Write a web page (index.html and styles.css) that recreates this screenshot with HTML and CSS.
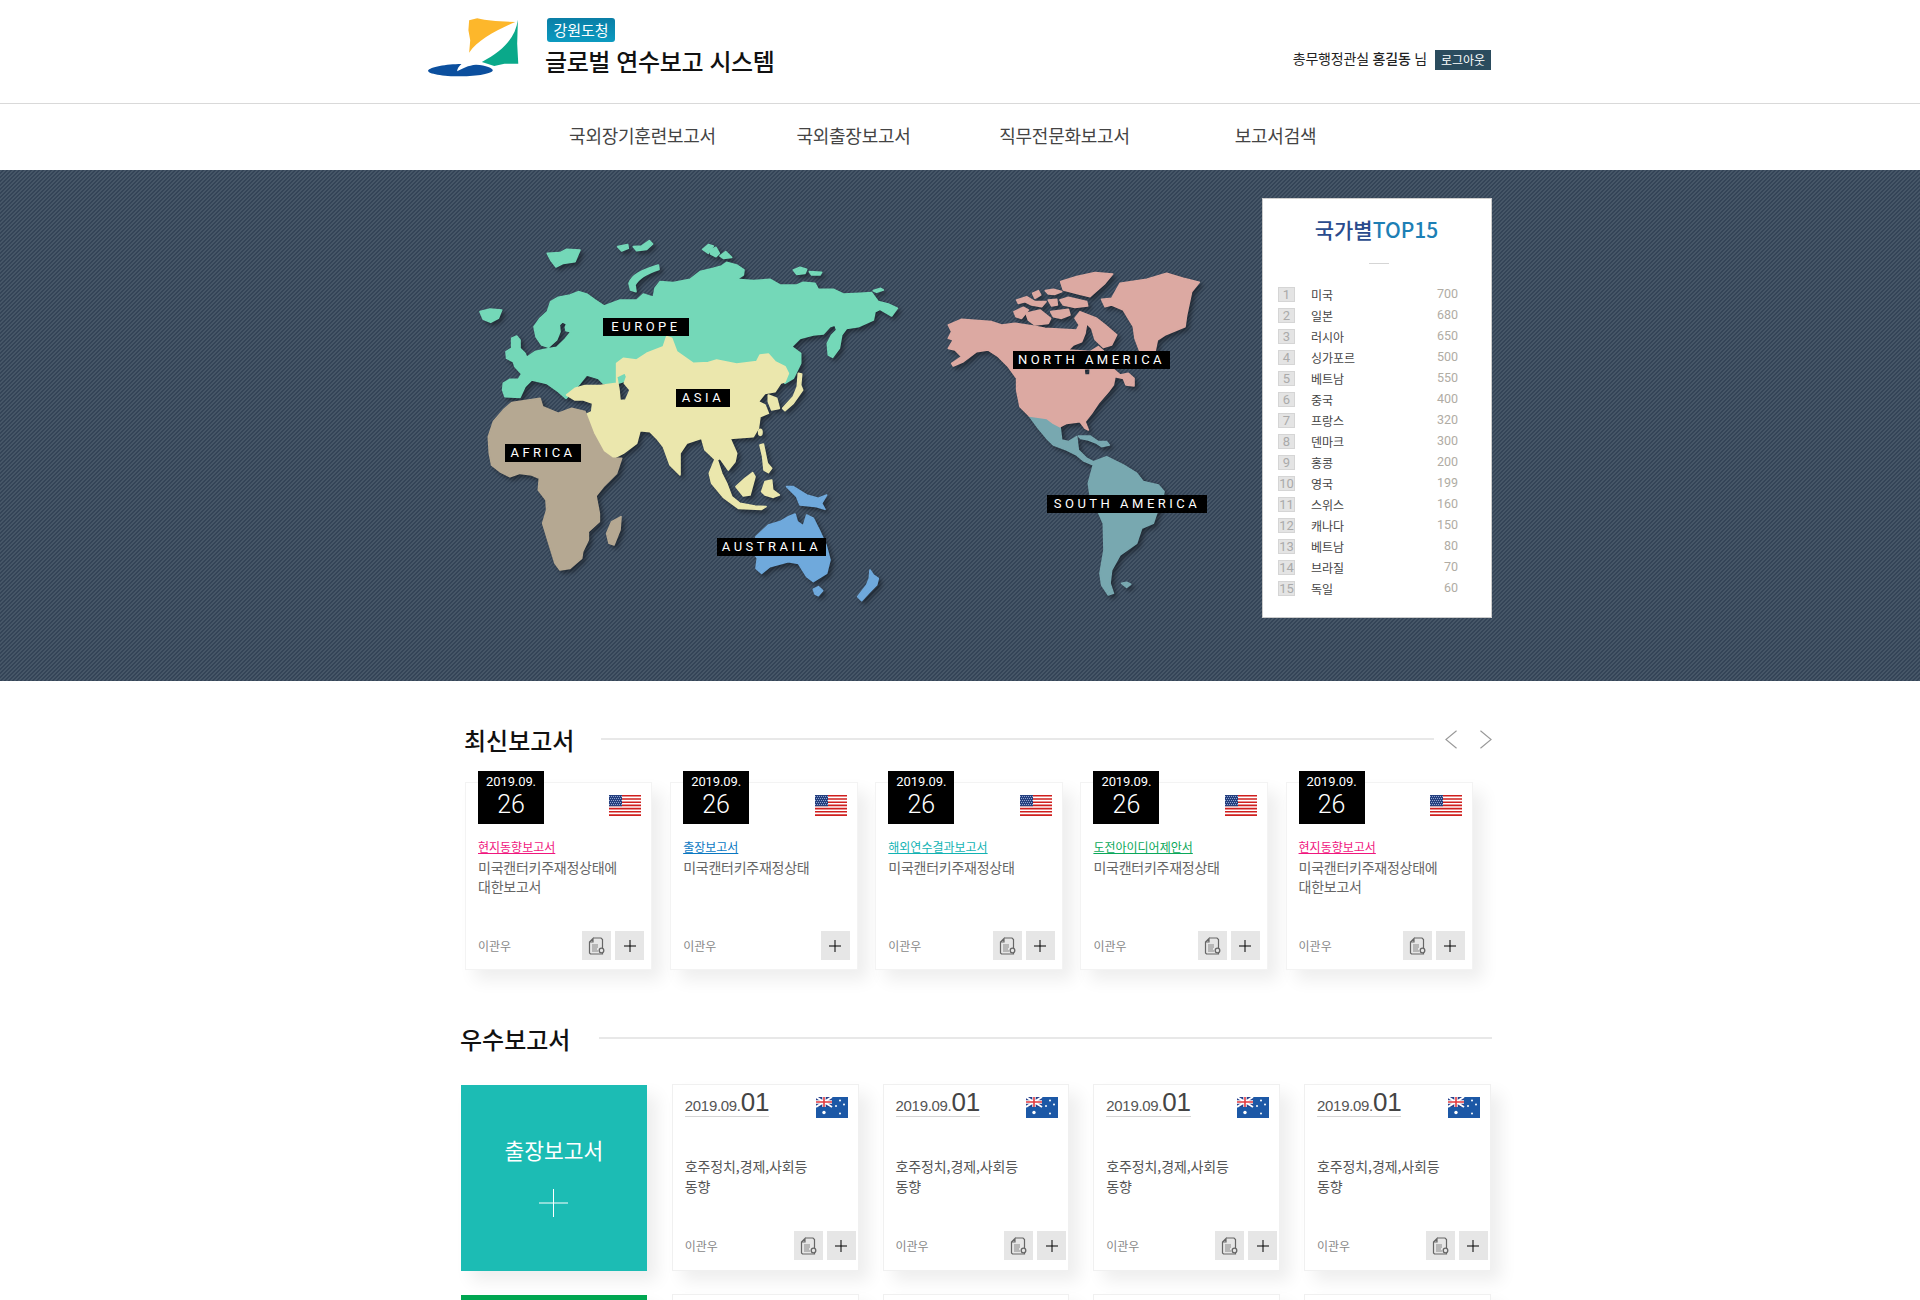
FILE: index.html
```html
<!DOCTYPE html>
<html lang="ko">
<head>
    <meta charset="UTF-8">
    <meta name="viewport" content="width=device-width, initial-scale=1.0">
    <title>글로벌 연수보고 시스템</title>
    <link rel="stylesheet" href="styles.css">
</head>
<body>
    <svg class="defs" width="0" height="0" aria-hidden="true">
        <symbol id="flag-us" viewBox="0 0 32 21">
            <rect width="32" height="21" fill="#fff"/>
            <path d="M0 0h32v1.600H0zM0 3.200h32v1.600H0zM0 6.400h32v1.600H0zM0 9.600h32v1.600H0zM0 12.800h32v1.600H0zM0 16h32v1.600H0zM0 19.200h32V21H0z" fill="#cf1f1e"/>
            <rect width="13" height="11.200" fill="#25407f"/>
            <path d="M0 1.500h13M1 3.500h12M0 5.500h13M1 7.500h12M0 9.500h13" stroke="#8fa3cf" stroke-width="1" stroke-dasharray="1 1"/>
        </symbol>
        <symbol id="flag-au" viewBox="0 0 32 21">
            <rect width="32" height="21" fill="#1c58a6"/>
            <rect width="16" height="10" fill="#27408b"/>
            <path d="M0 0l16 10M16 0L0 10" stroke="#fff" stroke-width="2"/>
            <path d="M8 0v10M0 5h16" stroke="#fff" stroke-width="3.400"/>
            <path d="M8 0v10M0 5h16" stroke="#e2393e" stroke-width="1.600"/>
            <circle cx="8" cy="15.500" r="1.700" fill="#fff"/>
            <circle cx="24" cy="3.500" r="1" fill="#fff"/>
            <circle cx="24" cy="16.500" r="1" fill="#fff"/>
            <circle cx="20" cy="9" r="1" fill="#fff"/>
            <circle cx="28" cy="7.500" r="1" fill="#fff"/>
        </symbol>
        <symbol id="icon-doc" viewBox="0 0 17 18">
            <path d="M5 1h8l1.500 1.500v9M14.500 15.500V17H2.500L1.500 16V5L5 1.500V5H1.500" fill="none" stroke="#666" stroke-width="1.200"/>
            <path d="M4 8h6M4 10h6M4 12h5M4 14h6" stroke="#888" stroke-width="1.200"/>
            <circle cx="13.500" cy="13.500" r="2.300" fill="none" stroke="#666" stroke-width="1.300"/>
        </symbol>
        <symbol id="icon-plus" viewBox="0 0 12 12">
            <path d="M6 0v12M0 6h12" stroke="#000" stroke-width="1"/>
        </symbol>
    </svg>

    <div class="page">
        <header class="top">
            <div class="wrap top-inner">
                <svg class="logo" viewBox="80 50 250 180" preserveAspectRatio="none">
                    <path d="M193 60L215 54L235 58L265 62L320 65C270 88 215 120 193 157L196 120L191 90Z" fill="#fdb72b"/>
                    <path d="M327 58C320 110 290 150 228 185L262 197L290 190L328 190L325 130Z" fill="#0aa98a"/>
                    <path d="M80 211C85 200 130 191 172 191C165 198 160 205 160 213C175 204 190 195 212 193C240 195 258 203 258 210C258 220 215 228 170 228C120 228 80 220 80 211Z" fill="#0b4f9e"/>
                </svg>
                <div class="brand">
                    <span class="brand-badge">강원도청</span>
                    <h1>글로벌 연수보고 시스템</h1>
                </div>
                <div class="user">
                    <span class="user-name">총무행정관실 <b>홍길동</b> 님</span>
                    <a class="logout" href="#">로그아웃</a>
                </div>
            </div>
        </header>

        <nav class="gnb">
            <div class="wrap gnb-inner">
                <a href="#">국외장기훈련보고서</a>
                <a href="#">국외출장보고서</a>
                <a href="#">직무전문화보고서</a>
                <a href="#">보고서검색</a>
            </div>
        </nav>

        <section class="hero">
            <div class="wrap hero-inner">
                <div class="map">
                    <svg class="map-svg" viewBox="428 170 834 510">
                        <g class="land" transform="translate(460 220) scale(.33333)">
                            <g fill="#74d8b8" stroke="#74d8b8">
                                <path d="M262 100L300 98L320 88L360 90L345 125L310 130L288 141L272 120Z"/>
                                <path d="M473 80L503 74L505 85L485 93Z"/>
                                <path d="M520 80L545 78L568 62L578 72L560 88L530 92Z"/>
                                <path d="M728 88L745 74L760 78L745 100Z"/>
                                <path d="M752 90L768 82L778 100L768 110L752 102Z"/>
                                <path d="M780 108L797 95L815 112L790 115Z"/>
                                <path d="M507 190C515 165 545 150 595 135L597 148C565 158 535 175 525 195L528 215L512 210Z"/>
                                <path d="M1000 150L1020 142L1040 148L1035 160L1010 163Z"/>
                                <path d="M1048 155L1085 157L1080 165L1055 165Z"/>
                                <path d="M1240 212L1262 205L1270 210L1250 217Z"/>
                                <path d="M60 275L90 267L125 270L115 295L92 307L70 298Z"/>
                                <path d="M128 510L130 490L150 478L175 478L185 462L165 440L160 425L140 415L138 395L155 385L155 355L170 348L180 360L180 385L195 400L200 412L225 395L255 388L290 382L315 358L333 335L318 332L316 322L320 312L308 305L298 315L300 335L290 360L265 382L245 375L228 350L222 320L240 295L262 275L272 245L295 232L330 225L355 215L380 222L405 240L432 258L480 240L530 240L550 222L580 232L585 205L600 185L640 188L690 178L720 155L760 145L785 138L800 127L830 135L852 150L850 165L830 178L880 182L930 178L960 195L1010 195L1030 187L1065 190L1075 208L1120 208L1150 222L1200 220L1235 218L1255 245L1285 252L1312 265L1295 288L1260 268L1245 275L1240 300L1195 320L1160 325L1145 345L1138 385L1118 412L1105 405L1102 370L1115 345L1130 330L1125 315L1110 320L1090 342L1060 345L1020 355L995 380L1022 400L1022 430L1000 475L975 490L960 470L900 450L600 450L472 490L430 490L415 475L380 465L360 490L318 535L295 515L260 490L215 480L195 500L180 532L135 530Z"/>
                            </g>
                            <g fill="#ebe7ad" stroke="#ebe7ad">
                                <path fill-rule="evenodd" d="M320 525L345 505L375 497L420 497L470 490L470 430L490 415L530 420L560 400L610 380L620 350L635 355L650 395L700 430L745 428L770 420L830 432L890 425L900 405L925 402L945 425L975 440L985 460L975 485L962 490L945 515L915 520L895 545L915 555L925 580L900 590L895 625L880 650L810 655L830 700L825 725L805 750L780 715L772 720L785 760L800 790L815 830L840 850L885 858L918 860L905 868L835 865L790 832L755 790L748 760L765 718L735 690L725 655L680 670L660 700L660 765L630 735L610 680L590 655L570 635L540 632L530 670L490 700L460 715L430 695L400 640L375 585L395 575L398 550L370 540L345 540ZM470 470L495 458L500 470L493 490L510 510L497 540L480 542L477 510Z"/>
                                <path d="M925 525L950 535L958 565L935 570L925 545Z"/>
                                <path d="M1015 460L1025 462L1022 495L1028 510L1000 550L975 572L968 565L1000 530L1012 500Z"/>
                                <ellipse cx="901" cy="637" rx="5" ry="9"/>
                                <path d="M900 675L910 672L922 730L935 745L925 758L912 750L908 710Z"/>
                                <path d="M828 800L855 775L878 758L885 770L870 825L850 828Z"/>
                                <path d="M905 815L915 785L935 780L938 810L958 825L940 832L915 825Z"/>
                            </g>
                            <g fill="#b5a892" stroke="#b5a892">
                                <path d="M85 650L100 605L130 570L155 548L240 535L248 560L295 580L335 565L375 575L400 640L430 695L458 715L485 715L470 760L430 800L408 828L418 880L418 905L385 935L385 960L368 995L365 1015L330 1045L300 1050L285 1030L265 965L248 910L260 870L258 840L235 810L238 775L215 765L180 760L150 770L120 755L95 735L88 700Z"/>
                                <path d="M440 940L455 905L483 890L480 930L462 975L447 970Z"/>
                            </g>
                            <g fill="#6fa9dc" stroke="#6fa9dc">
                                <path d="M888 950L925 915L960 905L985 890L1005 882L1012 905L1030 918L1040 885L1060 895L1080 935L1098 975L1110 1020L1100 1060L1060 1085L1040 1070L1015 1030L985 1025L930 1040L905 1060L888 1045L892 1015L882 1000Z"/>
                                <path d="M980 800L1000 800L1040 825L1075 835L1100 825L1085 850L1095 868L1070 860L1050 858L1020 855L1010 830Z"/>
                                <path d="M1060 1108L1075 1100L1088 1112L1075 1127L1065 1122Z"/>
                                <path d="M1230 1050L1240 1065L1255 1075L1250 1095L1225 1120L1205 1142L1193 1130L1220 1095L1228 1075Z"/>
                            </g>
                        </g>
                        <g class="land" transform="translate(920 250) scale(.33333)">
                            <g fill="#78a8b0" stroke="#78a8b0">
                                <path d="M328 498L380 505L400 520L420 530L425 570L445 575L470 560L475 600L500 625L520 635L560 620L610 645L650 670L670 695L715 705L732 725L725 760L710 790L700 820L665 835L650 880L600 915L575 960L570 1000L580 1030L565 1035L545 1005L540 970L552 900L550 820L530 775L510 735L505 700L520 645L490 632L470 615L440 600L400 585L380 565L355 535Z"/>
                                <path d="M475 558L510 558L535 575L560 575L568 585L545 590L530 580L505 570L482 565Z"/>
                                <path d="M605 1000L620 997L632 1003L620 1012Z"/>
                            </g>
                            <g fill="#dca9a2" stroke="#dca9a2">
                                <path fill-rule="evenodd" d="M85 225L125 208L175 212L215 215L245 225L285 220L340 228L375 235L430 238L470 240L478 225L465 205L480 185L530 205L555 225L590 255L575 285L550 292L525 268L515 235L500 220L495 250L485 275L460 285L445 300L510 305L535 290L550 303L560 340L600 375L625 370L642 385L642 408L618 405L610 385L585 380L580 405L565 425L535 460L515 490L495 515L505 540L495 535L480 515L440 520L420 530L400 520L380 505L328 498L300 470L290 420L290 385L265 350L235 320L205 300L170 305L130 335L100 348L95 340L125 320L105 300L85 295L100 270L85 265L95 245ZM492 357L511 355L510 375L494 375Z"/>
                                <path d="M545 148L575 145L600 100L680 88L740 70L790 85L838 97L815 125L800 195L795 230L735 255L712 270L705 305L660 305L645 265L640 230L610 180L575 165L555 170Z"/>
                                <path d="M422 95L470 80L525 68L578 72L555 100L510 140L470 130L430 120Z"/>
                                <path d="M338 130L355 122L362 135L345 145Z"/>
                                <path d="M376 122L400 118L425 125L405 133L385 132Z"/>
                                <path d="M290 150L320 140L345 155L378 155L365 170L335 165L315 155L295 160Z"/>
                                <path d="M385 150L410 148L412 165L395 168Z"/>
                                <path d="M420 150L445 142L500 155L503 168L465 172L430 165Z"/>
                                <path d="M282 185L310 172L325 180L305 205L288 200Z"/>
                                <path d="M318 190L360 180L392 205L385 220L345 225L325 210Z"/>
                                <path d="M392 185L445 178L450 195L425 205L400 200Z"/>
                            </g>
                        </g>
                    </svg>
                    <span class="pin pin-europe">EUROPE</span>
                    <span class="pin pin-asia">ASIA</span>
                    <span class="pin pin-africa">AFRICA</span>
                    <span class="pin pin-australia">AUSTRAILA</span>
                    <span class="pin pin-namerica">NORTH AMERICA</span>
                    <span class="pin pin-samerica">SOUTH AMERICA</span>
                </div>

                <aside class="rank">
                    <h3><span class="rank-a">국가별</span><span class="rank-b">TOP15</span></h3>
                    <ol class="rank-list">
                        <li><i>1</i><span>미국</span><em>700</em></li>
                        <li><i>2</i><span>일본</span><em>680</em></li>
                        <li><i>3</i><span>러시아</span><em>650</em></li>
                        <li><i>4</i><span>싱가포르</span><em>500</em></li>
                        <li><i>5</i><span>베트남</span><em>550</em></li>
                        <li><i>6</i><span>중국</span><em>400</em></li>
                        <li><i>7</i><span>프랑스</span><em>320</em></li>
                        <li><i>8</i><span>덴마크</span><em>300</em></li>
                        <li><i>9</i><span>홍콩</span><em>200</em></li>
                        <li><i>10</i><span>영국</span><em>199</em></li>
                        <li><i>11</i><span>스위스</span><em>160</em></li>
                        <li><i>12</i><span>캐나다</span><em>150</em></li>
                        <li><i>13</i><span>베트남</span><em>80</em></li>
                        <li><i>14</i><span>브라질</span><em>70</em></li>
                        <li><i>15</i><span>독일</span><em>60</em></li>
                    </ol>
                </aside>
            </div>
        </section>

        <div class="wrap">
            <section class="latest">
                <div class="sec-head">
                    <h2>최신보고서</h2>
                    <div class="sec-line"></div>
                    <div class="arrows">
                        <svg viewBox="0 0 13 20"><path d="M12.500 .5L1 10l11.500 9.500"/></svg>
                        <svg viewBox="0 0 13 20"><path d="M.5 .5L12 10 .5 19.500"/></svg>
                    </div>
                </div>
                <div class="latest-row">
                    <article class="card">
                        <div class="card-top">
                            <div class="date-box"><span>2019.09.</span><strong>26</strong></div>
                            <svg class="flag"><use href="#flag-us"/></svg>
                        </div>
                        <a class="tag tag-pink" href="#">현지동향보고서</a>
                        <p class="desc">미국캔터키주재정상태에 대한보고서</p>
                        <div class="card-foot">
                            <span class="author">이관우</span>
                            <a class="btn" href="#"><svg class="i-doc"><use href="#icon-doc"/></svg></a>
                            <a class="btn" href="#"><svg class="i-plus"><use href="#icon-plus"/></svg></a>
                        </div>
                    </article>
                    <article class="card">
                        <div class="card-top">
                            <div class="date-box"><span>2019.09.</span><strong>26</strong></div>
                            <svg class="flag"><use href="#flag-us"/></svg>
                        </div>
                        <a class="tag tag-blue" href="#">출장보고서</a>
                        <p class="desc">미국캔터키주재정상태</p>
                        <div class="card-foot">
                            <span class="author">이관우</span>
                            <a class="btn" href="#"><svg class="i-plus"><use href="#icon-plus"/></svg></a>
                        </div>
                    </article>
                    <article class="card">
                        <div class="card-top">
                            <div class="date-box"><span>2019.09.</span><strong>26</strong></div>
                            <svg class="flag"><use href="#flag-us"/></svg>
                        </div>
                        <a class="tag tag-teal" href="#">해외연수결과보고서</a>
                        <p class="desc">미국캔터키주재정상태</p>
                        <div class="card-foot">
                            <span class="author">이관우</span>
                            <a class="btn" href="#"><svg class="i-doc"><use href="#icon-doc"/></svg></a>
                            <a class="btn" href="#"><svg class="i-plus"><use href="#icon-plus"/></svg></a>
                        </div>
                    </article>
                    <article class="card">
                        <div class="card-top">
                            <div class="date-box"><span>2019.09.</span><strong>26</strong></div>
                            <svg class="flag"><use href="#flag-us"/></svg>
                        </div>
                        <a class="tag tag-green" href="#">도전아이디어제안서</a>
                        <p class="desc">미국캔터키주재정상태</p>
                        <div class="card-foot">
                            <span class="author">이관우</span>
                            <a class="btn" href="#"><svg class="i-doc"><use href="#icon-doc"/></svg></a>
                            <a class="btn" href="#"><svg class="i-plus"><use href="#icon-plus"/></svg></a>
                        </div>
                    </article>
                    <article class="card">
                        <div class="card-top">
                            <div class="date-box"><span>2019.09.</span><strong>26</strong></div>
                            <svg class="flag"><use href="#flag-us"/></svg>
                        </div>
                        <a class="tag tag-pink" href="#">현지동향보고서</a>
                        <p class="desc">미국캔터키주재정상태에 대한보고서</p>
                        <div class="card-foot">
                            <span class="author">이관우</span>
                            <a class="btn" href="#"><svg class="i-doc"><use href="#icon-doc"/></svg></a>
                            <a class="btn" href="#"><svg class="i-plus"><use href="#icon-plus"/></svg></a>
                        </div>
                    </article>
                </div>
            </section>

            <section class="best">
                <div class="sec-head">
                    <h2>우수보고서</h2>
                    <div class="sec-line"></div>
                </div>
                <div class="best-grid">
                    <a class="tile tile-teal" href="#">
                        <span>출장보고서</span>
                        <svg class="tile-plus" viewBox="0 0 29 28"><path d="M14.500 0v28M0 14h29"/></svg>
                    </a>
                    <article class="card-b">
                        <div class="card-b-top">
                            <div class="date-line">2019.09.<b>01</b></div>
                            <svg class="flag"><use href="#flag-au"/></svg>
                        </div>
                        <p class="desc-b">호주정치,경제,사회등 동향</p>
                        <div class="card-foot">
                            <span class="author">이관우</span>
                            <a class="btn" href="#"><svg class="i-doc"><use href="#icon-doc"/></svg></a>
                            <a class="btn" href="#"><svg class="i-plus"><use href="#icon-plus"/></svg></a>
                        </div>
                    </article>
                    <article class="card-b">
                        <div class="card-b-top">
                            <div class="date-line">2019.09.<b>01</b></div>
                            <svg class="flag"><use href="#flag-au"/></svg>
                        </div>
                        <p class="desc-b">호주정치,경제,사회등 동향</p>
                        <div class="card-foot">
                            <span class="author">이관우</span>
                            <a class="btn" href="#"><svg class="i-doc"><use href="#icon-doc"/></svg></a>
                            <a class="btn" href="#"><svg class="i-plus"><use href="#icon-plus"/></svg></a>
                        </div>
                    </article>
                    <article class="card-b">
                        <div class="card-b-top">
                            <div class="date-line">2019.09.<b>01</b></div>
                            <svg class="flag"><use href="#flag-au"/></svg>
                        </div>
                        <p class="desc-b">호주정치,경제,사회등 동향</p>
                        <div class="card-foot">
                            <span class="author">이관우</span>
                            <a class="btn" href="#"><svg class="i-doc"><use href="#icon-doc"/></svg></a>
                            <a class="btn" href="#"><svg class="i-plus"><use href="#icon-plus"/></svg></a>
                        </div>
                    </article>
                    <article class="card-b">
                        <div class="card-b-top">
                            <div class="date-line">2019.09.<b>01</b></div>
                            <svg class="flag"><use href="#flag-au"/></svg>
                        </div>
                        <p class="desc-b">호주정치,경제,사회등 동향</p>
                        <div class="card-foot">
                            <span class="author">이관우</span>
                            <a class="btn" href="#"><svg class="i-doc"><use href="#icon-doc"/></svg></a>
                            <a class="btn" href="#"><svg class="i-plus"><use href="#icon-plus"/></svg></a>
                        </div>
                    </article>
                    <div class="tile tile-green"></div>
                    <div class="card-b"></div>
                    <div class="card-b"></div>
                    <div class="card-b"></div>
                    <div class="card-b"></div>
                </div>
            </section>
        </div>
    </div>
</body>
</html>
```

FILE: styles.css
```css
* {
    box-sizing: border-box;
}
body {
    margin: 0;
    font-family: "Noto Sans CJK KR", "Noto Sans", sans-serif;
    color: #333;
    background: #fff;
}
a {
    color: inherit;
    text-decoration: none;
}
.defs {
    position: absolute;
}
.page {
    height: 1300px;
    overflow: hidden;
}
.wrap {
    width: 1064px;
    margin: 0 auto;
}

/* header */
.top {
    height: 104px;
    border-bottom: 1px solid #d9d9d9;
}
.top-inner {
    display: flex;
    align-items: flex-start;
}
.logo {
    width: 91px;
    height: 60px;
    margin: 17px 26px 0 0;
}
.brand {
    padding-top: 18px;
}
.brand-badge {
    display: block;
    width: 68px;
    height: 24px;
    margin-left: 2px;
    border-radius: 3px;
    background: linear-gradient(#0a7ea6, #0c9ac0);
    color: #fff;
    font-size: 15px;
    line-height: 24px;
    text-align: center;
}
.brand h1 {
    margin: 2px 0 0;
    font-size: 24px;
    font-weight: 500;
    line-height: 34px;
    letter-spacing: -.4px;
    color: #111;
}
.user {
    display: flex;
    align-items: center;
    gap: 8px;
    margin: 50px 1px 0 auto;
    font-size: 14px;
    letter-spacing: -.2px;
    color: #222;
}
.user-name {
    margin-top: -4px;
}
.user b {
    font-weight: 500;
}
.logout {
    width: 56px;
    height: 20px;
    background: #2b4c5e;
    color: #fff;
    font-size: 12px;
    line-height: 20px;
    letter-spacing: 0;
    text-align: center;
}

/* nav */
.gnb {
    height: 66px;
}
.gnb-inner {
    display: grid;
    grid-template-columns: repeat(4, 211px);
    padding-left: 109px;
}
.gnb-inner a {
    font-size: 18px;
    line-height: 62px;
    letter-spacing: -.25px;
    text-align: center;
    color: #444;
}

/* hero */
.hero {
    height: 511px;
    background-color: #3c4c5e;
    background-image: linear-gradient(135deg, #465667 25%, #344457 25%, #344457 50%, #465667 50%, #465667 75%, #344457 75%);
    background-size: 4px 4px;
}
.hero-inner {
    display: flex;
}
.map {
    position: relative;
    width: 834px;
    height: 510px;
    flex: none;
}
.map-svg {
    display: block;
    width: 834px;
    height: 510px;
}
.land {
    filter: drop-shadow(9px 9px 6px rgba(0, 0, 0, .4));
    stroke-width: 5;
    stroke-linejoin: round;
}
.pin {
    position: absolute;
    height: 18px;
    background: #000;
    color: #fff;
    font-family: Roboto, sans-serif;
    font-size: 13px;
    line-height: 18px;
    letter-spacing: 3.500px;
    text-align: center;
}
.pin-europe { left: 175px; top: 148px; width: 86px; }
.pin-asia { left: 248px; top: 219px; width: 54px; }
.pin-africa { left: 77px; top: 274px; width: 76px; }
.pin-australia { left: 289px; top: 368px; width: 109px; }
.pin-namerica { left: 585px; top: 181px; width: 157px; }
.pin-samerica { left: 619px; top: 325px; width: 160px; }

/* ranking */
.rank {
    width: 230px;
    height: 420px;
    margin-top: 28px;
    padding: 15px 33px 0 15px;
    background: #fff;
    border: 1px solid #ccc;
}
.rank h3 {
    position: relative;
    margin: 0 -17px 0 0;
    padding-bottom: 20px;
    font-size: 21px;
    font-weight: 500;
    line-height: 30px;
    text-align: center;
}
.rank h3::after {
    content: "";
    position: absolute;
    left: 91px;
    bottom: 0;
    width: 20px;
    border-bottom: 1px solid #d5d5d5;
}
.rank-a {
    color: #2a4b8d;
}
.rank-b {
    color: #1d7fb5;
}
.rank-list {
    margin: 20px 0 0;
    padding: 0;
    list-style: none;
}
.rank-list li {
    display: flex;
    align-items: center;
    height: 21px;
    font-size: 12px;
    color: #444;
}
.rank-list i {
    width: 17px;
    height: 15px;
    margin-right: 16px;
    background: #e4e4e4;
    border: 1px solid #d5d5d5;
    color: #aaa;
    font-family: Roboto, sans-serif;
    font-size: 13px;
    font-style: normal;
    line-height: 13px;
    text-align: center;
}
.rank-list em {
    margin: -3px 0 0 auto;
    color: #b0aca4;
    font-family: Roboto, sans-serif;
    font-size: 12.500px;
    font-style: normal;
}

/* section heads */
.sec-head {
    display: flex;
    align-items: center;
    height: 24px;
}
.sec-head h2 {
    margin: 1px 29px 0 0;
    font-size: 24px;
    font-weight: 500;
    line-height: 24px;
    color: #111;
}
.latest .sec-head h2 {
    margin: 1px 27px 0 -1px;
}
.sec-line {
    flex: 1;
    border-top: 2px solid #e8e8e8;
}
.arrows {
    display: flex;
    gap: 23px;
    margin-left: 11px;
}
.arrows svg {
    display: block;
    width: 12px;
    height: 19px;
    fill: none;
    stroke: #999;
    stroke-width: 1.200;
}

/* latest */
.latest {
    padding: 46px 0 0 37px;
}
.latest-row {
    display: grid;
    grid-template-columns: repeat(5, 1fr);
    column-gap: 17.700px;
    width: 1008px;
    margin-top: 31px;
}
.card {
    display: flex;
    flex-direction: column;
    height: 188px;
    padding: 0 7px 9px 12px;
    background: #fff;
    border: 1px solid #f3f3f3;
    box-shadow: 10px 10px 16px rgba(0, 0, 0, .07);
}
.card-top {
    display: flex;
    justify-content: space-between;
}
.date-box {
    width: 66px;
    height: 53px;
    margin-top: -12px;
    background: #000;
    color: #fff;
    text-align: center;
    font-family: Roboto, sans-serif;
}
.date-box span {
    display: block;
    padding-top: 2px;
    font-size: 13px;
    line-height: 17px;
    letter-spacing: -.1px;
}
.date-box strong {
    display: block;
    font-size: 25px;
    font-weight: 300;
    line-height: 30px;
}
.flag {
    display: block;
    width: 32px;
    height: 21px;
    margin: 12px 3px 0 0;
}
.tag {
    align-self: flex-start;
    margin-top: 15px;
    font-size: 12px;
    line-height: 16px;
    text-decoration: underline;
}
.tag-pink { color: #f0167e; }
.tag-blue { color: #0a78c2; }
.tag-teal { color: #12b3b3; }
.tag-green { color: #0aa85a; }
.desc {
    flex: 1;
    margin: 3px 0 0;
    font-size: 14px;
    line-height: 18.500px;
    letter-spacing: -.25px;
    word-break: keep-all;
    color: #666;
}
.card-foot {
    display: flex;
    align-items: center;
    gap: 4px;
}
.author {
    margin-right: auto;
    font-size: 12px;
    color: #888;
}
.btn {
    display: flex;
    align-items: center;
    justify-content: center;
    width: 29px;
    height: 29px;
    background: #e6e6e6;
}
.i-doc {
    width: 17px;
    height: 18px;
}
.i-plus {
    width: 12px;
    height: 12px;
}

/* best */
.best {
    padding: 56px 0 0 32px;
}
.best-grid {
    display: grid;
    grid-template-columns: repeat(5, 186.750px);
    grid-auto-rows: 187px;
    gap: 23px 24px;
    margin: 34px 0 0 1px;
}
.tile {
    display: flex;
    flex-direction: column;
    align-items: center;
    gap: 24px;
    margin: 1px 1px 0 0;
    padding-top: 50px;
    color: #fff;
    font-size: 21.500px;
    line-height: 30px;
    box-shadow: 10px 10px 16px rgba(0, 0, 0, .07);
}
.tile-teal {
    background: #1cbcb4;
}
.tile-green {
    background: #00a651;
}
.tile-plus {
    width: 29px;
    height: 28px;
    fill: none;
    stroke: #fff;
    stroke-width: 1;
}
.card-b {
    display: flex;
    flex-direction: column;
    padding: 0 2px 10px 12px;
    background: #fff;
    border: 1px solid #f0f0f0;
    box-shadow: 10px 10px 16px rgba(0, 0, 0, .07);
}
.card-b-top {
    display: flex;
    justify-content: space-between;
}
.date-line {
    height: 31px;
    margin-top: 1px;
    border-bottom: 1px solid #d5d5d5;
    font-family: "Liberation Sans", sans-serif;
    font-size: 15px;
    line-height: 32px;
    letter-spacing: -.3px;
    color: #555;
}
.date-line b {
    font-size: 26px;
    font-weight: 400;
    color: #444;
}
.card-b .flag {
    margin: 12px 8px 0 0;
}
.desc-b {
    flex: 1;
    margin: 38px 0 0;
    padding-right: 40px;
    font-size: 14px;
    line-height: 20px;
    letter-spacing: -.1px;
    word-break: keep-all;
    color: #555;
}
```
